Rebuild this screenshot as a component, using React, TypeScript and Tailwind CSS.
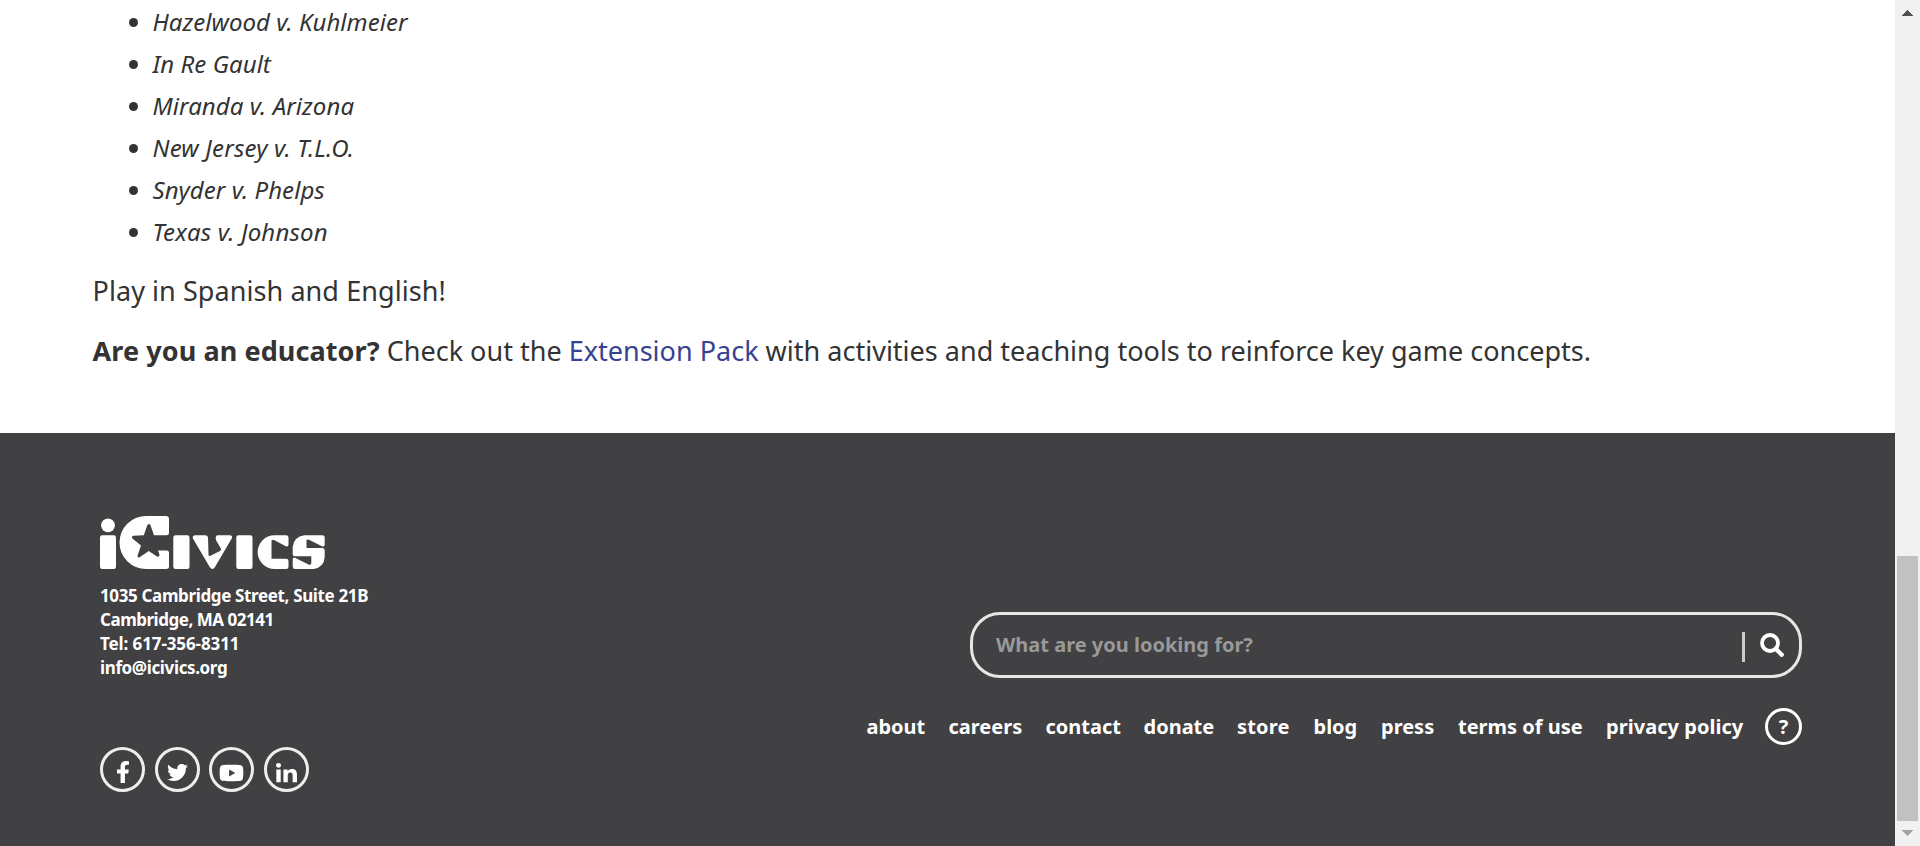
import React from 'react';
import { FaFacebookF, FaTwitter, FaYoutube, FaLinkedinIn } from 'react-icons/fa';

const cases = [
  { name: 'Hazelwood v. Kuhlmeier', tracking: 'tracking-[0.04px]' },
  { name: 'In Re Gault', tracking: 'tracking-[0.05px]' },
  { name: 'Miranda v. Arizona', tracking: 'tracking-[0.07px]' },
  { name: 'New Jersey v. T.L.O.', tracking: 'tracking-[0.19px]' },
  { name: 'Snyder v. Phelps', tracking: 'tracking-[0.05px]' },
  { name: 'Texas v. Johnson', tracking: 'tracking-[0.18px]' },
];

const links = [
  { label: 'about', box: 'w-[82px]' },
  { label: 'careers', box: 'w-[97px]' },
  { label: 'contact', box: 'w-[98px]' },
  { label: 'donate', box: 'w-[93.5px]' },
  { label: 'store', box: 'w-[76.5px] tracking-[0.2px]' },
  { label: 'blog', box: 'w-[67.5px]' },
  { label: 'press', box: 'w-[77px]' },
  { label: 'terms of use', box: 'w-[148px]' },
  { label: 'privacy policy', box: 'w-[159px] tracking-[0.04px]' },
];

const socials = [
  { name: 'Facebook', Icon: FaFacebookF, box: 'mr-[10px]', icon: 'h-[22px] w-[14px]' },
  { name: 'Twitter', Icon: FaTwitter, box: 'mr-[9px]', icon: 'mt-px h-[21px] w-[21px]' },
  { name: 'YouTube', Icon: FaYoutube, box: 'mr-[10px]', icon: 'mt-px h-[22px] w-[25px]' },
  { name: 'LinkedIn', Icon: FaLinkedinIn, box: '', icon: 'mt-[3px] h-[22px] w-[21px]' },
];

function Logo() {
  return (
    <svg className="block h-[55px] w-[228px]" viewBox="0 0 228 55" fill="#fff" role="img" aria-label="iCivics">
      <circle cx="9" cy="10.3" r="6.9" />
      <rect x="1" y="20.3" width="16" height="33.7" rx="2.2" />
      <path
        fillRule="evenodd"
        d="M47 1H67Q70 1 70 4V18Q70 20.300 67.500 20.300H55L51.600 10.500Q49.900 7.600 48.200 10.500L44.800 20.300L34.500 20.700Q31.500 21.500 34 24L42 30.500L38.500 40.800Q38.300 43.200 40.700 42.300L49.700 36L58 41.500Q61.500 42.300 60 38L59 35.400H67.500Q70 35.400 70 37.500V51.500Q70 54 67 54H47A26.500 26.500 0 0 1 47 1Z"
      />
      <rect x="74.300" y="20.300" width="16.200" height="33.700" rx="2.200" />
      <path d="M96 20.300H106Q108.800 20.300 109 22.500L109.500 39.500Q109.500 41.600 111.500 40.800L121 36Q122.700 35 121.700 33.300L117.200 25.500Q115.500 20.300 119 20.300H131Q134 20.600 132.700 23.500L116 52Q113.500 55.800 110.700 52L94.200 24Q92.600 20.800 96 20.300Z" />
      <rect x="137.300" y="20.300" width="16.200" height="33.700" rx="2.200" />
      <path d="M175.500 20.300H187Q189.500 20.300 189.500 22.500V29.500Q189.500 32 187.300 31.500L175 25Q172.500 24.500 172.500 26V43.700H187Q189.500 43.700 189.500 46V51.500Q189.500 54 187 54H175.500A16.850 16.850 0 0 1 175.500 20.300Z" />
      <path d="M205.500 20.300H223Q225.700 20.300 225.700 22.500V29.500Q225.700 32 223.500 31.500L210 24.700Q207.500 24 207.500 26V33H223Q225.700 33 225.700 35.500V42Q225 52.500 214.500 54H196Q193.700 54 193.700 51.500V44.500Q193.700 42 196 42.700L209.500 49.500Q212.300 50.500 212.300 48V41.300H196Q193.700 41.300 193.700 39V32Q194.500 22 205.500 20.300Z" />
    </svg>
  );
}

function SearchIcon() {
  return (
    <svg className="ml-[15px] size-[24px]" viewBox="0 0 24 24" fill="none" stroke="#fff">
      <circle cx="10" cy="10" r="8" strokeWidth="3.8" />
      <path d="M15.800 15.800L21.700 21.700" strokeWidth="4.400" strokeLinecap="round" />
    </svg>
  );
}

function Scrollbar() {
  return (
    <div className="flex w-[25px] shrink-0 flex-col items-center bg-[#f1f1f1]">
      <svg className="mt-[10px] h-[6px] w-[11px]" viewBox="0 0 11 6" fill="#505050" shapeRendering="crispEdges">
        <path d="M5.500 0L11 6H0Z" />
      </svg>
      <div className="mt-[540px] h-[265px] w-[21px] bg-[#c1c1c1]" />
      <svg className="mt-[9px] h-[6px] w-[11px]" viewBox="0 0 11 6" fill="#a3a3a3" shapeRendering="crispEdges">
        <path d="M0 0H11L5.500 6Z" />
      </svg>
    </div>
  );
}

export default function App() {
  return (
    <div className="flex h-[846px] w-[1920px] overflow-hidden bg-white font-['Noto_Sans',sans-serif] text-[#333]">
      <div className="flex w-[1895px] flex-col">
        <main className="h-[433px] shrink-0 pl-[92.5px] pt-px">
          <ul className="text-[24px] leading-[42px] italic">
            {cases.map(({ name, tracking }) => (
              <li key={name} className="flex items-center pl-9">
                <span className="mr-[15px] size-[9px] rounded-full bg-[#333]" />
                <span className={tracking}>{name}</span>
              </li>
            ))}
          </ul>
          <p className="mt-[17px] text-[27px] leading-[42px] tracking-[0.07px]">Play in Spanish and English!</p>
          <p className="mt-[18px] text-[27px] leading-[42px] tracking-[0.01px]">
            <strong className="font-bold tracking-[0.09px]">Are you an educator?</strong> Check out the{' '}
            <a className="text-[#374292]">Extension Pack</a> with activities and teaching tools to reinforce key game
            concepts.
          </p>
        </main>

        <footer className="flex grow justify-between bg-[#414042] pl-[99px] pr-[93px] font-bold text-white">
          <div className="pt-[82px]">
            <Logo />
            <address className="ml-px mt-[14px] text-[17px] leading-[24px] not-italic whitespace-nowrap">
              <div className="tracking-[-0.36px]">1035 Cambridge Street, Suite 21B</div>
              <div className="tracking-[-0.48px]">Cambridge, MA 02141</div>
              <div className="tracking-[-0.1px]">Tel: 617-356-8311</div>
              <div className="tracking-[-0.37px]">info@icivics.org</div>
            </address>
            <div className="ml-px mt-[67px] flex">
              {socials.map(({ name, Icon, box, icon }) => (
                <a
                  key={name}
                  aria-label={name}
                  className={`flex size-[45px] items-center justify-center rounded-full border-3 border-[#eee] pt-[5px] ${box}`}
                >
                  <Icon className={icon} preserveAspectRatio="none" />
                </a>
              ))}
            </div>
          </div>

          <div className="flex flex-col items-end pt-[179px]">
            <div className="flex h-[66px] w-[832px] items-center rounded-[30px] border-3 border-[#e6e7e7] pl-[23px] pr-[15px]">
              <span className="grow text-[20px] text-[#999]">What are you looking for?</span>
              <span className="mt-[3px] h-[30px] w-[3px] bg-[#ccc]" />
              <SearchIcon />
            </div>
            <nav className="mt-[30px] flex h-[37px] items-center text-[20px] whitespace-nowrap">
              {links.map(({ label, box }) => (
                <a key={label} className={box}>
                  {label}
                </a>
              ))}
              <a className="flex size-[37px] items-center justify-center rounded-full border-3 border-white text-[20px]">
                ?
              </a>
            </nav>
          </div>
        </footer>
      </div>
      <Scrollbar />
    </div>
  );
}
